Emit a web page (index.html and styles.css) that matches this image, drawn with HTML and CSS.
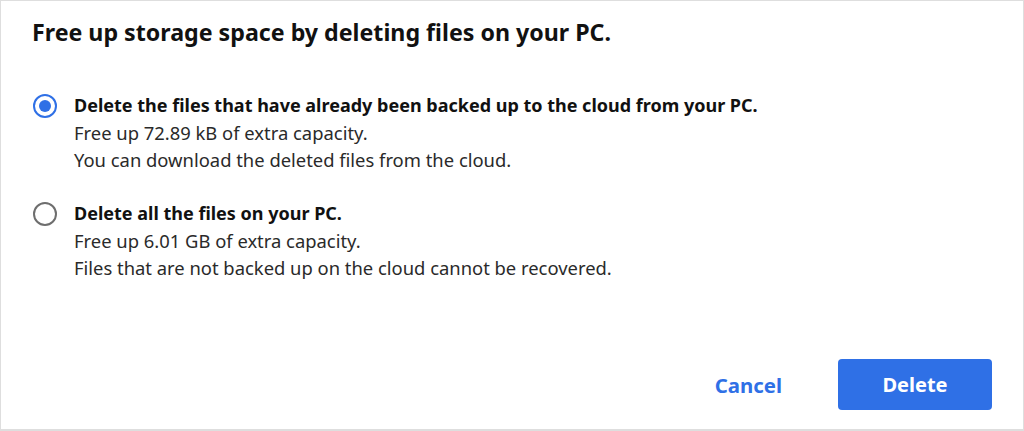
FILE: index.html
```html
<!DOCTYPE html>
<html lang="en">
<head>
<meta charset="utf-8">
<link rel="stylesheet" href="styles.css">
</head>
<body>
<div class="dialog">
  <h1 class="title">Free up storage space by deleting files on your PC.</h1>
  <div class="options">
    <label class="option">
      <span class="radio checked"></span>
      <span class="option-text">
        <span class="option-title">Delete the files that have already been backed up to the cloud from your PC.</span>
        <span class="option-desc">Free up 72.89 kB of extra capacity.</span>
        <span class="option-desc">You can download the deleted files from the cloud.</span>
      </span>
    </label>
    <label class="option">
      <span class="radio"></span>
      <span class="option-text">
        <span class="option-title">Delete all the files on your PC.</span>
        <span class="option-desc">Free up 6.01 GB of extra capacity.</span>
        <span class="option-desc">Files that are not backed up on the cloud cannot be recovered.</span>
      </span>
    </label>
  </div>
  <div class="actions">
    <button class="btn btn-text">Cancel</button>
    <button class="btn btn-primary">Delete</button>
  </div>
</div>
</body>
</html>
```
FILE: styles.css
```css
html, body {
  margin: 0;
  padding: 0;
  background: #ffffff;
}
body {
  font-family: "Noto Sans", "Open Sans", sans-serif;
  color: #1a1a1a;
}
.dialog {
  box-sizing: border-box;
  width: 1024px;
  height: 431px;
  border: 1px solid #dedede;
  border-bottom-width: 2px;
  display: flex;
  flex-direction: column;
  padding: 16px 31px 19px 31px;
}
.title {
  margin: 0;
  font-size: 23.2px;
  line-height: 30px;
  font-weight: 700;
  color: #111;
}
.options {
  margin-top: 45px;
  display: flex;
  flex-direction: column;
  gap: 26px;
}
.option {
  display: flex;
  align-items: flex-start;
  gap: 17px;
}
.radio {
  box-sizing: border-box;
  flex: none;
  width: 24px;
  height: 24px;
  margin-top: 2px;
  margin-left: 1px;
  border-radius: 50%;
  border: 2px solid #6e6e6e;
  display: flex;
  align-items: center;
  justify-content: center;
}
.radio.checked {
  border-color: #2f70e6;
}
.radio.checked::after {
  content: "";
  width: 12px;
  height: 12px;
  border-radius: 50%;
  background: #2f70e6;
}
.option-text {
  display: flex;
  flex-direction: column;
}
.option-title {
  font-size: 18px;
  line-height: 27px;
  font-weight: 700;
  color: #111;
}
.option-desc {
  font-size: 18.4px;
  line-height: 27.3px;
  color: #2a2a2a;
}
.actions {
  margin-top: auto;
  display: flex;
  justify-content: flex-end;
  align-items: center;
  gap: 56px;
}
.btn {
  font-family: inherit;
  font-size: 20px;
  font-weight: 700;
  border: none;
  cursor: pointer;
}
.btn-text {
  background: none;
  color: #2f70e6;
  padding: 0;
  font-size: 20.4px;
}
.btn-primary {
  background: #2f70e6;
  color: #fff;
  width: 154px;
  height: 51px;
  border-radius: 4px;
}
```
